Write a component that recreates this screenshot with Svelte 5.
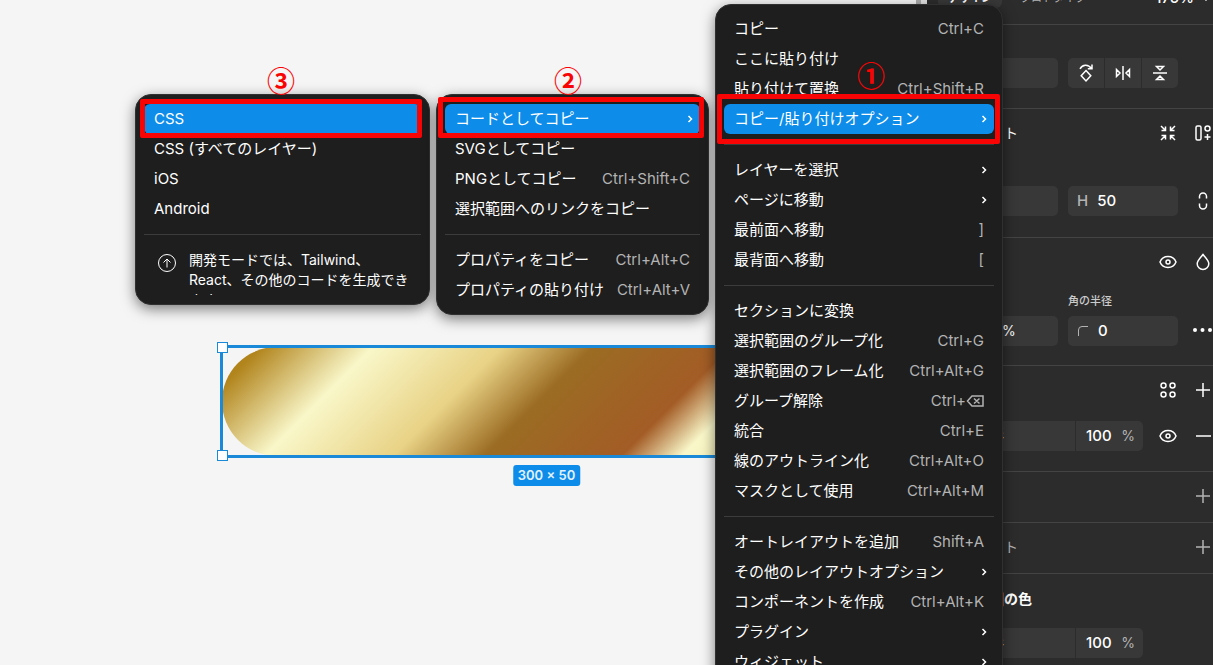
<script>
  const mainMenu = [
    { label: 'コピー', key: 'Ctrl+C' },
    { label: 'ここに貼り付け' },
    { label: '貼り付けて置換', key: 'Ctrl+Shift+R' },
    { label: 'コピー/貼り付けオプション', sub: true, active: true },
    null,
    { label: 'レイヤーを選択', sub: true },
    { label: 'ページに移動', sub: true },
    { label: '最前面へ移動', key: ']' },
    { label: '最背面へ移動', key: '[' },
    null,
    { label: 'セクションに変換' },
    { label: '選択範囲のグループ化', key: 'Ctrl+G' },
    { label: '選択範囲のフレーム化', key: 'Ctrl+Alt+G' },
    { label: 'グループ解除', key: 'Ctrl+', erase: true },
    { label: '統合', key: 'Ctrl+E' },
    { label: '線のアウトライン化', key: 'Ctrl+Alt+O' },
    { label: 'マスクとして使用', key: 'Ctrl+Alt+M' },
    null,
    { label: 'オートレイアウトを追加', key: 'Shift+A' },
    { label: 'その他のレイアウトオプション', sub: true },
    { label: 'コンポーネントを作成', key: 'Ctrl+Alt+K' },
    { label: 'プラグイン', sub: true },
    { label: 'ウィジェット', sub: true },
  ];
  const copyMenu = [
    { label: 'コードとしてコピー', sub: true, active: true },
    { label: 'SVGとしてコピー' },
    { label: 'PNGとしてコピー', key: 'Ctrl+Shift+C' },
    { label: '選択範囲へのリンクをコピー' },
    null,
    { label: 'プロパティをコピー', key: 'Ctrl+Alt+C' },
    { label: 'プロパティの貼り付け', key: 'Ctrl+Alt+V' },
  ];
  const codeMenu = [
    { label: 'CSS', active: true },
    { label: 'CSS (すべてのレイヤー)' },
    { label: 'iOS' },
    { label: 'Android' },
    null,
  ];
</script>

{#snippet items(list)}
  {#each list as item}
    {#if item}
      <button class="item" class:active={item.active} role="menuitem">
        <span>{item.label}</span>
        {#if item.key}
          <kbd>{item.key}{#if item.erase}<svg width="18" height="12" viewBox="0 0 18 12"><path d="M6 1h11v10H6L1.500 6zM8 3.500l5.500 5M13.500 3.500l-5.500 5" /></svg>{/if}</kbd>
        {/if}
        {#if item.sub}
          <svg class="chev" width="6" height="8" viewBox="0 0 6 8"><path d="M1.500 1l3 3-3 3" /></svg>
        {/if}
      </button>
    {:else}
      <hr />
    {/if}
  {/each}
{/snippet}

{#snippet eye()}
  <svg width="20" height="20" viewBox="0 0 20 20"><path d="M2 10c1.500-3.700 4.500-5.500 8-5.500s6.500 1.800 8 5.500c-1.500 3.700-4.500 5.500-8 5.500S3.500 13.700 2 10z" /><circle cx="10" cy="10" r="2" /></svg>
{/snippet}

{#snippet plus()}
  <svg width="20" height="20" viewBox="0 0 20 20"><path d="M10 3v14M3 10h14" /></svg>
{/snippet}

<div class="app">
  <main class="canvas">
    <div class="shape">
      <i class="handle top"></i>
      <i class="handle bottom"></i>
      <span class="size">300 × 50</span>
    </div>
  </main>
  <div class="scroll"></div>

  <aside class="panel">
    <header>
      <button class="tab on">デザイン</button>
      <button class="tab">プロトタイプ</button>
      <button class="zoom">175% <svg width="8" height="8" viewBox="0 0 8 8"><path d="M1 2l3 3 3-3" /></svg></button>
    </header>

    <section class="rotate">
      <div class="row">
        <input class="field" aria-label="回転" />
        <div class="group">
          <button aria-label="90度回転"><svg width="20" height="20" viewBox="0 0 20 20"><path d="M10 7.500l4.800 5.200-4.800 5.300-4.800-5.300zM4 5.800c2.500-4.300 8-5 11.500-.3M16 1.500v4.200h-4.200" /></svg></button>
          <button aria-label="左右反転"><svg width="20" height="20" viewBox="0 0 20 20"><path d="M10 3v14M3.500 6.500v7L7 10zM16.500 6.500v7L13 10z" /></svg></button>
          <button aria-label="上下反転"><svg width="20" height="20" viewBox="0 0 20 20"><path d="M3 10h14M6.500 3.500h7L10 7zM6.500 16.500h7L10 13z" /></svg></button>
        </div>
      </div>
    </section>

    <section class="layout">
      <div class="row head">
        <h2 class="lit">レイアウト</h2>
        <div class="tools">
          <button aria-label="縮小"><svg width="20" height="20" viewBox="0 0 20 20"><path d="M3 3l4 4M3.500 7.500h4v-4M17 3l-4 4M12.500 3.500v4h4M3 17l4-4M3.500 12.500h4v4M17 17l-4-4M16.500 12.500h-4v4" /></svg></button>
          <button aria-label="自動レイアウト"><svg width="20" height="20" viewBox="0 0 20 20"><rect x="3" y="3" width="5" height="14" rx="1.500" /><circle cx="14.500" cy="5.500" r="2.500" /><path d="M14.500 11v6M11.500 14h6" /></svg></button>
        </div>
      </div>
      <div class="row">
        <input class="field" aria-label="幅" />
        <label class="field"><span>H</span><input value="50" /></label>
        <button class="end" aria-label="縦横比"><svg width="20" height="20" viewBox="0 0 20 20"><path d="M6.500 7.500V5.500a3.500 3.500 0 0 1 7 0v2M6.500 12.500v2a3.500 3.500 0 0 0 7 0v-2" /></svg></button>
      </div>
    </section>

    <section class="looks">
      <div class="row head">
        <h2>外観</h2>
        <div class="tools">
          <button aria-label="表示">{@render eye()}</button>
          <button aria-label="ブレンド"><svg width="20" height="20" viewBox="0 0 20 20"><path d="M10 2.500c-2.500 3.200-5.800 6-5.800 9.200a5.800 5.800 0 0 0 11.600 0c0-3.200-3.300-6-5.800-9.200z" /></svg></button>
        </div>
      </div>
      <div class="row names"><span>不透明度</span><span>角の半径</span></div>
      <div class="row">
        <label class="field opacity"><input aria-label="不透明度" value="100" /><b>%</b></label>
        <label class="field"><svg class="corner" width="12" height="12" viewBox="0 0 12 12"><path d="M1.500 11V5a3.500 3.500 0 0 1 3.500-3.500h6" /></svg><input aria-label="角の半径" value="0" /></label>
        <button class="end" aria-label="詳細"><svg width="20" height="20" viewBox="0 0 20 20"><g class="solid"><circle cx="2" cy="9" r="2" /><circle cx="9.500" cy="9" r="2" /><circle cx="17" cy="9" r="2" /></g></svg></button>
      </div>
    </section>

    <section class="fill">
      <div class="row head">
        <h2>塗り</h2>
        <div class="tools">
          <button aria-label="スタイル"><svg width="20" height="20" viewBox="0 0 20 20"><circle cx="5.500" cy="5.500" r="2.500" /><circle cx="14.500" cy="5.500" r="2.500" /><circle cx="5.500" cy="14.500" r="2.500" /><circle cx="14.500" cy="14.500" r="2.500" /></svg></button>
          <button aria-label="追加">{@render plus()}</button>
        </div>
      </div>
      <div class="row">
        <div class="paint"><input aria-label="塗り" value="線形" /><label><input aria-label="塗りの不透明度" value="100" /><b>%</b></label></div>
        <div class="tools">
          <button aria-label="塗りの表示">{@render eye()}</button>
          <button aria-label="削除"><svg width="20" height="20" viewBox="0 0 20 20"><path d="M3 10h15" /></svg></button>
        </div>
      </div>
    </section>

    <section class="single"><div class="row head"><h2>線</h2><div class="tools"><button aria-label="線を追加">{@render plus()}</button></div></div></section>
    <section class="single"><div class="row head"><h2>エフェクト</h2><div class="tools"><button aria-label="エフェクトを追加">{@render plus()}</button></div></div></section>
    <section class="colors">
      <div class="row head"><h2 class="strong">選択範囲の色</h2></div>
      <div class="row">
        <div class="paint"><input aria-label="色" value="線形" /><label><input aria-label="色の不透明度" value="100" /><b>%</b></label></div>
      </div>
    </section>
  </aside>

  <nav class="menu code" aria-label="コード">
    {@render items(codeMenu)}
    <div class="note">
      <svg width="20" height="20" viewBox="0 0 20 20"><circle cx="10" cy="10" r="8.500" /><path d="M10 14.500v-8M6.500 9.500L10 6l3.500 3.500" /></svg>
      <p>開発モードでは、Tailwind、React、その他のコードを生成できます。</p>
    </div>
    <div class="frame"></div>
    <em>③</em>
  </nav>
  <nav class="menu copy" aria-label="コピー">
    {@render items(copyMenu)}
    <div class="frame"></div>
    <em>②</em>
  </nav>
  <nav class="menu context" aria-label="メニュー">
    {@render items(mainMenu)}
    <div class="frame"></div>
    <em>①</em>
  </nav>
</div>

<style>
  :global(body) { margin: 0; background: #f5f5f5; }
  .app {
    position: relative;
    display: flex;
    height: 100vh;
    overflow: hidden;
    font: 15px/20px Inter, "Noto Sans CJK JP", sans-serif;
    color: #fff;
  }
  * { box-sizing: border-box; }
  button, input { font: inherit; color: inherit; background: none; border: 0; padding: 0; margin: 0; min-width: 0; }
  svg { fill: none; stroke: currentColor; stroke-width: 1.5; flex: none; }
  .solid { fill: currentColor; stroke: none; }

  .canvas { position: relative; flex: 1; background: #f5f5f5; }
  .scroll { width: 11px; background: linear-gradient(90deg, #aaa 5px, #e2e2e2 5px); }
  .shape {
    position: absolute;
    left: 222px;
    top: 347px;
    width: 649px;
    height: 109px;
    border-radius: 55px;
    background: linear-gradient(135deg, #b1841c 5%, #f9f7c9 20%, #e8d285 37%, #9b6c23 49%, #a35c26 67%, #f9f7c9 75%, #e8d285 100%);
  }
  .shape::before { content: ""; position: absolute; inset: -2px; border: 3px solid #1a8ad8; }
  .handle { position: absolute; left: -5px; width: 11px; height: 11px; background: #fff; border: 1px solid #1a8ad8; }
  .top { top: -5px; }
  .bottom { bottom: -5px; }
  .size {
    position: absolute;
    left: 50%;
    top: 118px;
    transform: translateX(-50%);
    padding: 0 5px;
    border-radius: 3px;
    background: #0d8ce9;
    font-size: 13px;
    line-height: 21px;
    font-weight: 600;
    color: #e2f2fd;
    white-space: nowrap;
  }

  .panel { width: 286px; background: #2c2c2c; }
  header { display: flex; align-items: flex-end; height: 24px; padding: 0 0 16px 11px; gap: 8px; }
  header button { height: 36px; padding: 16px 10px 0; font-size: 15px; line-height: 20px; white-space: nowrap; color: #b3b3b3; border-radius: 6px; }
  header .on { background: #383838; color: #fff; font-weight: 600; }
  header .tab { font-size: 11px; }
  header .zoom { color: #fff; margin-left: auto; padding-right: 3px; font-weight: 500; }
  header .zoom svg { margin-left: 4px; }
  section { border-top: 1px solid #444; padding-left: 21px; }
  .row { display: flex; align-items: center; gap: 10px; }
  .head { height: 48px; }
  .tools { display: flex; gap: 15px; margin-left: auto; }
  .tools button, .end { width: 20px; height: 20px; flex: none; display: block; }
  h2 { margin: 0; font-size: 14px; font-weight: 400; color: #b3b3b3; }
  .lit { color: #fff; }
  .strong { font-weight: 600; color: #fff; }
  .field { display: flex; align-items: center; gap: 9px; width: 110px; height: 30px; padding: 0 9px; border-radius: 5px; background: #383838; color: #b3b3b3; font-weight: 500; }
  .field input { width: 60px; color: #fff; font-size: 15px; }
  .corner { stroke-width: 1; }
  .end { margin-left: auto; }
  b { font-weight: 400; color: #b3b3b3; font-size: 14px; }
  .group { display: flex; gap: 1px; border-radius: 5px; overflow: hidden; }
  .group button { width: 36px; height: 30px; display: grid; place-items: center; background: #383838; }
  .rotate { height: 84px; padding-top: 33px; }
  .layout { height: 129px; }
  .layout .head { margin-bottom: 29px; }
  .looks { height: 128px; }
  .names { font-size: 11px; height: 20px; margin: 5px 0; color: #ccc; }
  .names span { width: 110px; font-weight: 500; }
  .opacity input { width: 30px; }
  .opacity { gap: 4px; padding-left: 20px; }
  .opacity b { color: #fff; }
  .fill { height: 106px; }
  .fill .head { margin-bottom: 7px; }
  .paint { display: flex; gap: 1px; width: 195px; height: 30px; border-radius: 5px; overflow: hidden; }
  .paint > * { background: #383838; }
  .paint > input { flex: none; width: 127px; padding-left: 26px; }
  .paint label { display: flex; align-items: center; flex: 1; min-width: 0; padding: 0 8px 0 10px; }
  .paint label input { width: 38px; flex: 1; font-weight: 500; }
  .single { height: 51px; color: #b3b3b3; }
  .colors .head { height: 50px; margin-bottom: 4px; }

  .menu {
    position: absolute;
    padding: 9px 8px;
    border: 1px solid #303030;
    border-radius: 16px;
    background: #1e1e1e;
    box-shadow: 0 4px 14px rgba(0, 0, 0, 0.5);
  }
  .context { left: 715px; top: 4px; width: 288px; }
  .copy { left: 436px; top: 94px; width: 273px; }
  .code { left: 135px; top: 94px; width: 295px; }
  .item { display: flex; align-items: center; justify-content: space-between; width: 100%; height: 30px; padding: 0 10px; border-radius: 6px; white-space: nowrap; }
  .active { background: #0d8ce9; }
  kbd { display: flex; align-items: center; font: inherit; color: #b3b3b3; }
  .chev { margin-right: -3px; }
  hr { height: 1px; margin: 10px 0; border: 0; background: #3c3c3c; }
  .note { display: flex; gap: 12px; height: 50px; padding: 5px 8px 0 13px; overflow: hidden; }
  .note svg { margin-top: 3px; stroke-width: 1; }
  .note p { margin: 0; font-size: 14px; }
  .frame { position: absolute; border: 5px solid #f90404; border-radius: 2px; }
  .context .frame { left: 1px; right: 2px; top: 89px; height: 50px; }
  .copy .frame { left: 1px; right: 4px; top: 2px; height: 41px; }
  .code .frame { left: 4px; right: 7px; top: 4px; height: 39px; }
  em { position: absolute; font: 700 28px/28px "Noto Sans CJK JP", sans-serif; color: #f90404; }
  .context em { left: 141px; top: 56px; }
  .copy em { left: 117px; top: -29px; }
  .code em { left: 131px; top: -29px; }
</style>
